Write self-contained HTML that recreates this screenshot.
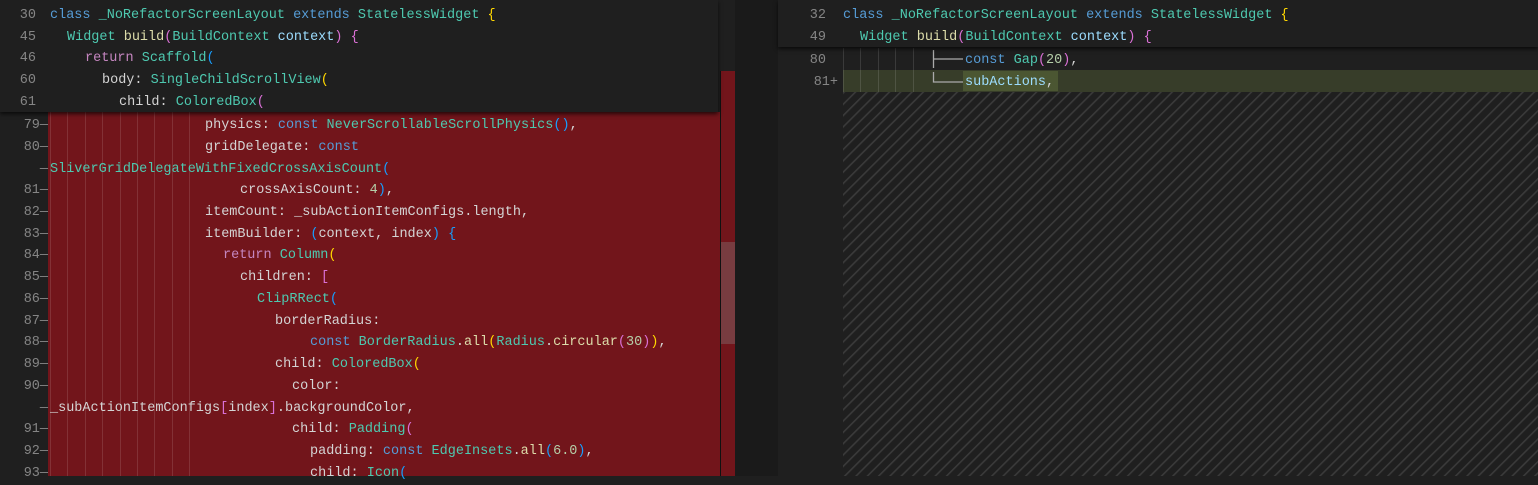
<!DOCTYPE html>
<html><head><meta charset="utf-8"><style>
body{margin:0;width:1538px;height:476px;overflow:hidden;background:#1f1f1f;font-family:"Liberation Mono",monospace;font-size:13.5px;color:#d4d4d4;position:relative}
.l{position:absolute;white-space:pre;height:21.7px;line-height:21.7px;margin-top:2px}
.n{position:absolute;white-space:pre;line-height:21.7px;color:#858585;text-align:right;margin-top:2px}
.k{color:#569cd6}.c{color:#4ec9b0}.f{color:#dcdcaa}.p{color:#c586c0}.v{color:#9cdcfe}.num{color:#b5cea8}
.y{color:#ffd700}.m{color:#da70d6}.b{color:#179fff}
.g{position:absolute;width:1px;background:rgba(255,255,255,0.12)}
</style></head><body>
<div style="position:absolute;left:48px;top:112px;width:687px;height:364px;background:#72151b"></div>
<div style="position:absolute;left:720px;top:0;width:1px;height:476px;background:#111"></div>
<div style="position:absolute;left:721px;top:242px;width:14px;height:102px;background:#783c40"></div>
<div style="position:absolute;left:735px;top:0;width:43px;height:476px;background:#1a1a1a"></div>
<div style="position:absolute;left:718px;top:0;width:17px;height:71px;background:#1f1f1f"></div>
<div style="position:absolute;left:721px;top:71px;width:14px;height:41px;background:#72151b"></div>
<div id="gl"></div>
<div style="position:absolute;left:0;top:0;width:718px;height:112px;background:#1f1f1f;box-shadow:0 2px 4px rgba(0,0,0,0.7);z-index:2">
<div class="n" style="left:0;width:36px;top:3px">30</div><div class="l" style="left:50px;top:3px"><span class="k">class</span> <span class="c">_NoRefactorScreenLayout</span> <span class="k">extends</span> <span class="c">StatelessWidget</span> <span class="y">{</span></div>
<div class="n" style="left:0;width:36px;top:25px">45</div><div class="l" style="left:67px;top:25px"><span class="c">Widget</span> <span class="f">build</span><span class="m">(</span><span class="c">BuildContext</span> <span class="v">context</span><span class="m">)</span> <span class="m">{</span></div>
<div class="n" style="left:0;width:36px;top:46px">46</div><div class="l" style="left:85px;top:46px"><span class="p">return</span> <span class="c">Scaffold</span><span class="b">(</span></div>
<div class="n" style="left:0;width:36px;top:68px">60</div><div class="l" style="left:102px;top:68px"><span>body:</span> <span class="c">SingleChildScrollView</span><span class="y">(</span></div>
<div class="n" style="left:0;width:36px;top:90px">61</div><div class="l" style="left:119px;top:90px"><span>child:</span> <span class="c">ColoredBox</span><span class="m">(</span></div>
</div>
<div class="n" style="left:0;width:48px;top:113px">79—</div><div class="l" style="left:205px;top:113px">physics: <span class="k">const</span> <span class="c">NeverScrollableScrollPhysics</span><span class="b">()</span>,</div>
<div class="n" style="left:0;width:48px;top:135px">80—</div><div class="l" style="left:205px;top:135px">gridDelegate: <span class="k">const</span></div>
<div class="n" style="left:0;width:48px;top:157px">—</div><div class="l" style="left:50px;top:157px"><span class="c">SliverGridDelegateWithFixedCrossAxisCount</span><span class="b">(</span></div>
<div class="n" style="left:0;width:48px;top:178px">81—</div><div class="l" style="left:240px;top:178px">crossAxisCount: <span class="num">4</span><span class="b">)</span>,</div>
<div class="n" style="left:0;width:48px;top:200px">82—</div><div class="l" style="left:205px;top:200px">itemCount: _subActionItemConfigs.length,</div>
<div class="n" style="left:0;width:48px;top:222px">83—</div><div class="l" style="left:205px;top:222px">itemBuilder: <span class="b">(</span>context, index<span class="b">)</span> <span class="b">{</span></div>
<div class="n" style="left:0;width:48px;top:243px">84—</div><div class="l" style="left:223px;top:243px"><span class="p">return</span> <span class="c">Column</span><span class="y">(</span></div>
<div class="n" style="left:0;width:48px;top:265px">85—</div><div class="l" style="left:240px;top:265px">children: <span class="m">[</span></div>
<div class="n" style="left:0;width:48px;top:287px">86—</div><div class="l" style="left:257px;top:287px"><span class="c">ClipRRect</span><span class="b">(</span></div>
<div class="n" style="left:0;width:48px;top:309px">87—</div><div class="l" style="left:275px;top:309px">borderRadius:</div>
<div class="n" style="left:0;width:48px;top:330px">88—</div><div class="l" style="left:310px;top:330px"><span class="k">const</span> <span class="c">BorderRadius</span>.<span class="f">all</span><span class="y">(</span><span class="c">Radius</span>.<span class="f">circular</span><span class="m">(</span><span class="num">30</span><span class="m">)</span><span class="y">)</span>,</div>
<div class="n" style="left:0;width:48px;top:352px">89—</div><div class="l" style="left:275px;top:352px">child: <span class="c">ColoredBox</span><span class="y">(</span></div>
<div class="n" style="left:0;width:48px;top:374px">90—</div><div class="l" style="left:292px;top:374px">color:</div>
<div class="n" style="left:0;width:48px;top:396px">—</div><div class="l" style="left:50px;top:396px">_subActionItemConfigs<span class="m">[</span>index<span class="m">]</span>.backgroundColor,</div>
<div class="n" style="left:0;width:48px;top:417px">91—</div><div class="l" style="left:292px;top:417px">child: <span class="c">Padding</span><span class="m">(</span></div>
<div class="n" style="left:0;width:48px;top:439px">92—</div><div class="l" style="left:310px;top:439px">padding: <span class="k">const</span> <span class="c">EdgeInsets</span>.<span class="f">all</span><span class="b">(</span><span class="num">6.0</span><span class="b">)</span>,</div>
<div class="n" style="left:0;width:48px;top:461px">93—</div><div class="l" style="left:310px;top:461px">child: <span class="c">Icon</span><span class="b">(</span></div>
<div style="position:absolute;left:778px;top:0;width:760px;height:476px;background:#1f1f1f"></div>
<svg style="position:absolute;left:843px;top:92px" width="695" height="384"><defs><pattern id="h" width="8" height="8" patternUnits="userSpaceOnUse" patternTransform="rotate(45)"><rect width="8" height="8" fill="#1f1f1f"/><rect width="1.6" height="8" fill="#3a3a3a"/></pattern></defs><rect width="695" height="384" fill="url(#h)"/></svg>
<div style="position:absolute;left:843px;top:70px;width:695px;height:22px;background:#373d29"></div>
<div style="position:absolute;left:963px;top:71px;width:95px;height:20px;background:#4b5632"></div>
<div style="position:absolute;left:778px;top:0;width:760px;height:47px;background:#1f1f1f;box-shadow:0 2px 4px rgba(0,0,0,0.7);z-index:2">
<div class="n" style="left:0;width:48px;top:3px">32</div><div class="l" style="left:65px;top:3px"><span class="k">class</span> <span class="c">_NoRefactorScreenLayout</span> <span class="k">extends</span> <span class="c">StatelessWidget</span> <span class="y">{</span></div>
<div class="n" style="left:0;width:48px;top:25px">49</div><div class="l" style="left:82px;top:25px"><span class="c">Widget</span> <span class="f">build</span><span class="m">(</span><span class="c">BuildContext</span> <span class="v">context</span><span class="m">)</span> <span class="m">{</span></div>
</div>
<div class="n" style="left:778px;width:48px;top:48px">80</div>
<div class="n" style="left:778px;width:60px;top:70px">81+</div>
<div id="gr"></div>
<svg style="position:absolute;left:930px;top:48px" width="40" height="44"><path d="M3.5 2V20M3.5 11H33M3.5 24V34H33" stroke="#aaa" stroke-width="1.3" fill="none"/></svg>
<div class="l" style="left:965px;top:48px"><span class="k">const</span> <span class="c">Gap</span><span class="m">(</span><span class="num">20</span><span class="m">)</span>,</div>
<div class="l" style="left:965px;top:70px"><span class="v">subActions</span>,</div>
<script>
var s='';for(var i=0;i<9;i++){var x=50+i*17.4;s+='<div class="g" style="left:'+x+'px;top:112px;height:364px"></div>';}
document.getElementById('gl').innerHTML=s;
var r='';for(var i=0;i<5;i++){var x=843+i*17.4;r+='<div class="g" style="left:'+x+'px;top:48px;height:44px"></div>';}
document.getElementById('gr').innerHTML=r;
</script>
</body></html>
